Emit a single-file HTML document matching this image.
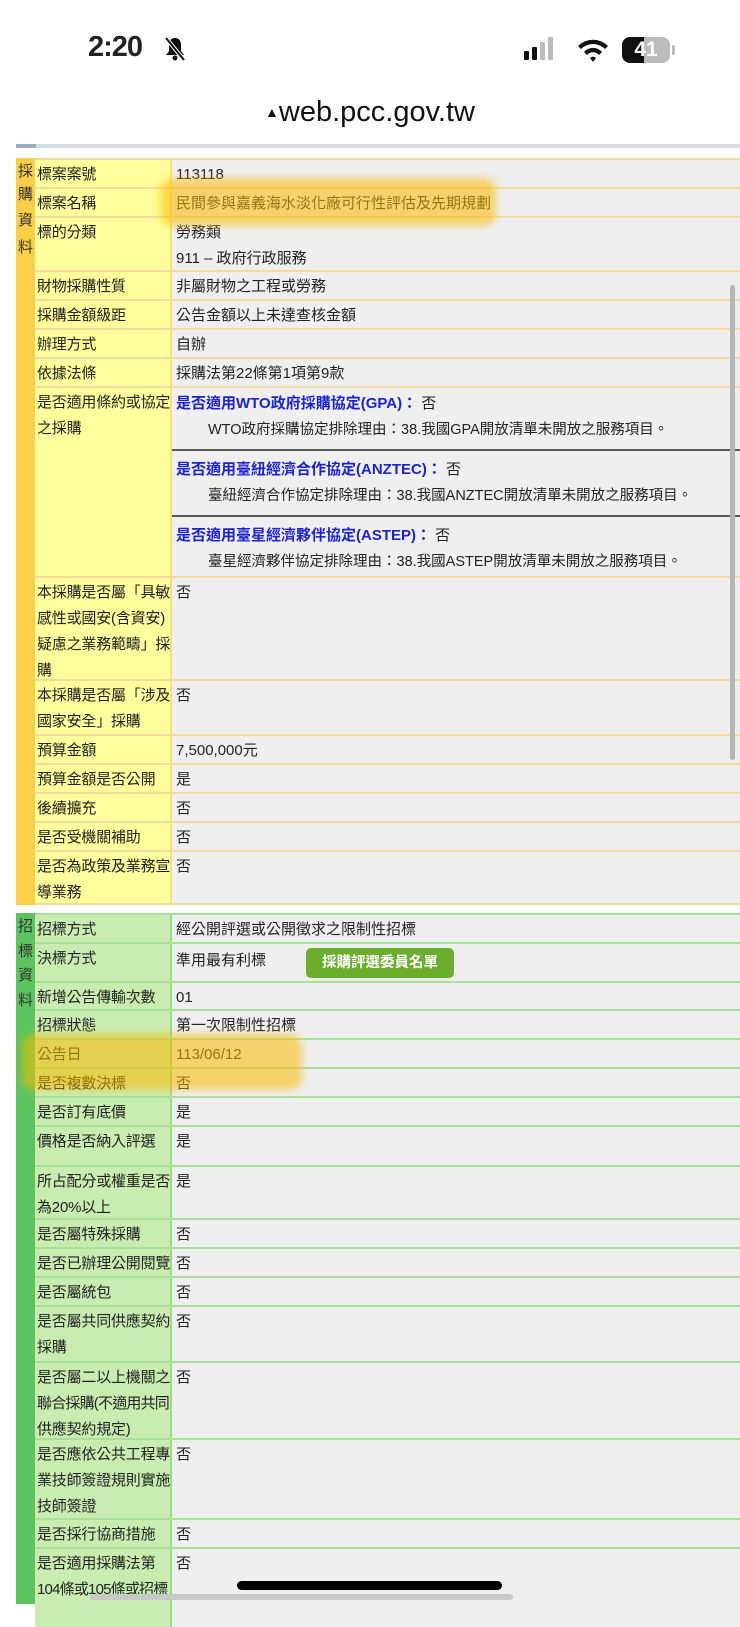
<!DOCTYPE html>
<html><head><meta charset="utf-8"><style>
*{margin:0;padding:0;box-sizing:border-box}
body{width:740px;height:1604px;overflow:hidden;background:#fff;font-family:"Liberation Sans","Noto Sans CJK TC",sans-serif;position:relative;color:#222}
.row{position:absolute;left:35px;width:705px}
.l,.v{position:absolute;top:0;bottom:0;font-size:15px;line-height:26px;padding-top:2px}
.l{left:0;width:137px;padding-left:2px;white-space:nowrap;letter-spacing:-0.2px;overflow:hidden}
.v{left:137px;right:0;background:#efefef;padding-left:4px}
.s1 .l{background:#ffff9b;box-shadow:inset -2px 0 0 #f7e07a}
.s1{border-top:2px solid #f6d9a0}
.s2 .l{background:#c9edb0;box-shadow:inset -2px 0 0 #9ad98a}
.s2{border-top:2px solid #a9df9a}
.strip{position:absolute;left:16px;width:19px;font-size:15px;color:#333;text-align:center}
.strip span{position:absolute;left:0;width:19px}
.b{color:#1b22d6;font-weight:bold;font-size:15px}
.sub{padding-left:32px;font-size:14.5px}
.hl{position:absolute;background:rgba(250,185,0,.55);filter:blur(4px);border-radius:12px}
</style></head><body>
<div style="position:absolute;left:88px;top:31px;font-size:29px;font-weight:bold;letter-spacing:-1px">2:20</div>
<svg style="position:absolute;left:163px;top:36px" width="24" height="26" viewBox="0 0 24 26"><path d="M12 2c-4 0-6 3-6 7v6l-3 4h18l-3-4V9c0-4-2-7-6-7z" fill="#111"/><circle cx="12" cy="22" r="2.5" fill="#111"/><line x1="3" y1="2" x2="21" y2="24" stroke="#fff" stroke-width="4"/><line x1="3" y1="2" x2="21" y2="24" stroke="#111" stroke-width="2"/></svg>
<div style="position:absolute;left:524px;top:51px;width:5px;height:9px;background:#111;border-radius:1px"></div>
<div style="position:absolute;left:532px;top:47px;width:5px;height:13px;background:#111;border-radius:1px"></div>
<div style="position:absolute;left:540px;top:42px;width:5px;height:18px;background:#bbb;border-radius:1px"></div>
<div style="position:absolute;left:548px;top:37px;width:5px;height:23px;background:#bbb;border-radius:1px"></div>
<svg style="position:absolute;left:576px;top:37px" width="34" height="26" viewBox="0 0 34 26"><path d="M2 9a21 21 0 0 1 30 0l-3 3a17 17 0 0 0-24 0z M8 15a12 12 0 0 1 18 0l-3 3a8 8 0 0 0-12 0z M14 21a4 4 0 0 1 6 0l-3 4z" fill="#111"/></svg>
<div style="position:absolute;left:622px;top:37px;width:48px;height:26px;border-radius:8px;background:#bcbcbc;overflow:hidden"><div style="width:22px;height:26px;background:#111"></div><div style="position:absolute;left:0;top:0;width:48px;text-align:center;color:#fff;font-weight:bold;font-size:21px;line-height:26px">41</div></div>
<div style="position:absolute;left:672px;top:45px;width:3px;height:10px;background:#bbb;border-radius:0 2px 2px 0"></div>
<div style="position:absolute;left:0;width:740px;top:96px;text-align:center;font-size:29px;color:#111"><span style="font-size:14px;vertical-align:4px">▲</span>web.pcc.gov.tw</div>
<div style="position:absolute;left:16px;top:144px;width:724px;height:4px;background:#d5dee4"></div>
<div style="position:absolute;left:16px;top:144px;width:20px;height:4px;background:#9bb0bf"></div>

<div class="strip" style="top:158px;height:747px;background:#fbce48"><span style="top:2px">採</span><span style="top:25px">購</span><span style="top:51px">資</span><span style="top:78px">料</span></div>

<div class="row s1" style="top:158px;height:29px"><div class="l">標案案號</div><div class="v">113118</div></div>
<div class="row s1" style="top:187px;height:29px"><div class="l">標案名稱</div><div class="v">民間參與嘉義海水淡化廠可行性評估及先期規劃</div></div>
<div class="row s1" style="top:216px;height:54px"><div class="l">標的分類</div><div class="v">勞務類<br>911 – 政府行政服務</div></div>
<div class="row s1" style="top:270px;height:29px"><div class="l">財物採購性質</div><div class="v">非屬財物之工程或勞務</div></div>
<div class="row s1" style="top:299px;height:29px"><div class="l">採購金額級距</div><div class="v">公告金額以上未達查核金額</div></div>
<div class="row s1" style="top:328px;height:29px"><div class="l">辦理方式</div><div class="v">自辦</div></div>
<div class="row s1" style="top:357px;height:29px"><div class="l">依據法條</div><div class="v">採購法第22條第1項第9款</div></div>
<div class="row s1" style="top:386px;height:190px"><div class="l">是否適用條約或協定<br>之採購</div><div class="v" style="padding-top:3px">
<div class="b">是否適用WTO政府採購協定(GPA)： <span style="color:#222;font-weight:normal">否</span></div>
<div class="sub">WTO政府採購協定排除理由：38.我國GPA開放清單未開放之服務項目。</div>
<div style="border-top:2px solid #555;margin:6px 0 6px -4px"></div>
<div class="b">是否適用臺紐經濟合作協定(ANZTEC)： <span style="color:#222;font-weight:normal">否</span></div>
<div class="sub">臺紐經濟合作協定排除理由：38.我國ANZTEC開放清單未開放之服務項目。</div>
<div style="border-top:2px solid #555;margin:6px 0 6px -4px"></div>
<div class="b">是否適用臺星經濟夥伴協定(ASTEP)： <span style="color:#222;font-weight:normal">否</span></div>
<div class="sub">臺星經濟夥伴協定排除理由：38.我國ASTEP開放清單未開放之服務項目。</div>
</div></div>
<div class="row s1" style="top:576px;height:103px"><div class="l">本採購是否屬「具敏<br>感性或國安(含資安)<br>疑慮之業務範疇」採<br>購</div><div class="v">否</div></div>
<div class="row s1" style="top:679px;height:55px"><div class="l">本採購是否屬「涉及<br>國家安全」採購</div><div class="v">否</div></div>
<div class="row s1" style="top:734px;height:29px"><div class="l">預算金額</div><div class="v">7,500,000元</div></div>
<div class="row s1" style="top:763px;height:29px"><div class="l">預算金額是否公開</div><div class="v">是</div></div>
<div class="row s1" style="top:792px;height:29px"><div class="l">後續擴充</div><div class="v">否</div></div>
<div class="row s1" style="top:821px;height:29px"><div class="l">是否受機關補助</div><div class="v">否</div></div>
<div class="row s1" style="top:850px;height:55px;border-bottom:2px solid #f6d9a0"><div class="l">是否為政策及業務宣<br>導業務</div><div class="v">否</div></div>

<div class="strip" style="top:913px;height:691px;background:#5cc45e"><span style="top:2px">招</span><span style="top:27px">標</span><span style="top:51px">資</span><span style="top:76px">料</span></div>

<div class="row s2" style="top:913px;height:29px"><div class="l">招標方式</div><div class="v">經公開評選或公開徵求之限制性招標</div></div>
<div class="row s2" style="top:942px;height:39px"><div class="l">決標方式</div><div class="v" style="padding-top:4px">準用最有利標<span style="position:absolute;left:134px;top:4px;width:148px;height:30px;background:#6aae2c;border-radius:5px;color:#fff;font-weight:bold;font-size:14.5px;text-align:center;line-height:30px">採購評選委員名單</span></div></div>
<div class="row s2" style="top:981px;height:28px"><div class="l">新增公告傳輸次數</div><div class="v">01</div></div>
<div class="row s2" style="top:1009px;height:29px"><div class="l">招標狀態</div><div class="v">第一次限制性招標</div></div>
<div class="row s2" style="top:1038px;height:29px"><div class="l">公告日</div><div class="v">113/06/12</div></div>
<div class="row s2" style="top:1067px;height:29px"><div class="l">是否複數決標</div><div class="v">否</div></div>
<div class="row s2" style="top:1096px;height:29px"><div class="l">是否訂有底價</div><div class="v">是</div></div>
<div class="row s2" style="top:1125px;height:40px"><div class="l">價格是否納入評選</div><div class="v">是</div></div>
<div class="row s2" style="top:1165px;height:53px"><div class="l">所占配分或權重是否<br>為20%以上</div><div class="v">是</div></div>
<div class="row s2" style="top:1218px;height:29px"><div class="l">是否屬特殊採購</div><div class="v">否</div></div>
<div class="row s2" style="top:1247px;height:29px"><div class="l">是否已辦理公開閱覽</div><div class="v">否</div></div>
<div class="row s2" style="top:1276px;height:29px"><div class="l">是否屬統包</div><div class="v">否</div></div>
<div class="row s2" style="top:1305px;height:56px"><div class="l">是否屬共同供應契約<br>採購</div><div class="v">否</div></div>
<div class="row s2" style="top:1361px;height:77px"><div class="l">是否屬二以上機關之<br><span style="letter-spacing:-0.8px">聯合採購(不適用共同</span><br>供應契約規定)</div><div class="v">否</div></div>
<div class="row s2" style="top:1438px;height:80px"><div class="l">是否應依公共工程專<br>業技師簽證規則實施<br>技師簽證</div><div class="v">否</div></div>
<div class="row s2" style="top:1518px;height:29px"><div class="l">是否採行協商措施</div><div class="v">否</div></div>
<div class="row s2" style="top:1547px;height:80px"><div class="l">是否適用採購法第<br><span style="letter-spacing:-0.8px">104條或105條或招標</span></div><div class="v">否</div></div>

<div class="hl" style="left:160px;top:178px;width:336px;height:48px"></div>
<div class="hl" style="left:22px;top:1034px;width:280px;height:56px"></div>

<div style="position:absolute;left:730px;top:285px;width:5px;height:475px;background:#b5b5b5;border-radius:3px"></div>
<div style="position:absolute;left:90px;top:1594px;width:423px;height:6px;background:#c8c8c8;border-radius:3px"></div>
<div style="position:absolute;left:237px;top:1581px;width:265px;height:9px;background:#000;border-radius:5px"></div>
</body></html>
